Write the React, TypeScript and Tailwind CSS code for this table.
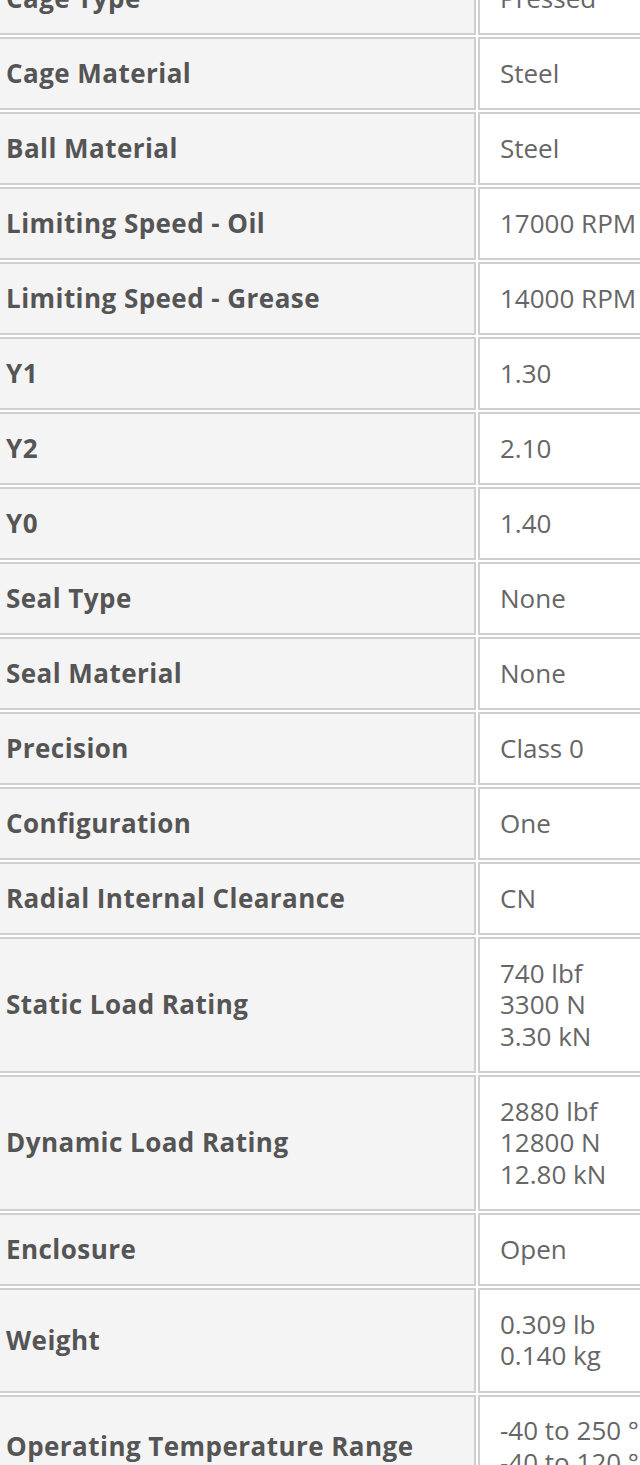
import React from 'react';

type Spec = { label: string; values: string[] };

const specs: Spec[] = [
  { label: 'Cage Type', values: ['Pressed'] },
  { label: 'Cage Material', values: ['Steel'] },
  { label: 'Ball Material', values: ['Steel'] },
  { label: 'Limiting Speed - Oil', values: ['17000 RPM'] },
  { label: 'Limiting Speed - Grease', values: ['14000 RPM'] },
  { label: 'Y1', values: ['1.30'] },
  { label: 'Y2', values: ['2.10'] },
  { label: 'Y0', values: ['1.40'] },
  { label: 'Seal Type', values: ['None'] },
  { label: 'Seal Material', values: ['None'] },
  { label: 'Precision', values: ['Class 0'] },
  { label: 'Configuration', values: ['One'] },
  { label: 'Radial Internal Clearance', values: ['CN'] },
  { label: 'Static Load Rating', values: ['740 lbf', '3300 N', '3.30 kN'] },
  { label: 'Dynamic Load Rating', values: ['2880 lbf', '12800 N', '12.80 kN'] },
  { label: 'Enclosure', values: ['Open'] },
  { label: 'Weight', values: ['0.309 lb', '0.140 kg'] },
  { label: 'Operating Temperature Range', values: ['-40 to 250 °F', '-40 to 120 °C'] },
];

const App: React.FC = () => {
  return (
    <div className="w-[640px] h-[1465px] overflow-hidden bg-white font-['Open_Sans',sans-serif] text-[26px]">
      {/* Spec table, scrolled so the first row is cut off */}
      <div className="-mt-[38px] -ml-[16px] w-[800px] flex flex-col gap-[2px]">
        {specs.map(spec => (
          <div key={spec.label} className="grid grid-cols-[492px_1fr] gap-[2px]">
            <div className="flex items-center border-2 border-[#cfcfcf] bg-[#f4f4f4] px-[20px] py-[18.75px] leading-[31.5px] font-bold tracking-[0.45px] text-[#555]">
              {spec.label}
            </div>
            <div className="border-2 border-[#cfcfcf] bg-white px-[20px] py-[18.75px] leading-[31.5px] text-[#666]">
              {spec.values.map(v => (
                <div key={v} className="whitespace-nowrap">{v}</div>
              ))}
            </div>
          </div>
        ))}
      </div>
    </div>
  );
};

export default App;
